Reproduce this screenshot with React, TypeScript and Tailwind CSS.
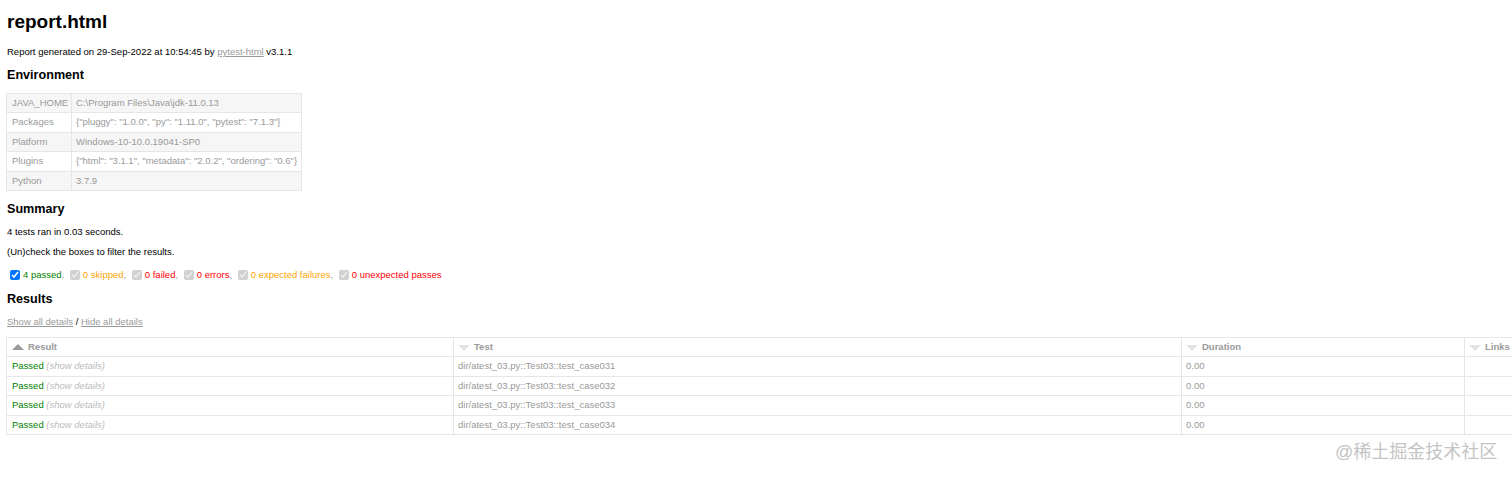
import React from "react";

const envRows: [string, string][] = [
  ["JAVA_HOME", "C:\\Program Files\\Java\\jdk-11.0.13"],
  ["Packages", '{"pluggy": "1.0.0", "py": "1.11.0", "pytest": "7.1.3"}'],
  ["Platform", "Windows-10-10.0.19041-SP0"],
  ["Plugins", '{"html": "3.1.1", "metadata": "2.0.2", "ordering": "0.6"}'],
  ["Python", "3.7.9"],
];

const tests = ["031", "032", "033", "034"];

function SortUp() {
  return (
    <span className="inline-block w-0 h-0 border-l-[6px] border-r-[6px] border-b-[6px] border-l-transparent border-r-transparent border-b-[#999] mr-[4px] align-middle relative top-[-1px]" />
  );
}
function SortDown() {
  return (
    <span className="inline-block w-0 h-0 border-l-[6px] border-r-[6px] border-t-[6px] border-l-transparent border-r-transparent border-t-[#e2e2e2] mr-[4px] align-middle relative top-[0px]" />
  );
}

function Filter({ label, color, active }: { label: string; color: string; active?: boolean }) {
  return (
    <span className="inline-flex items-center">
      <input
        type="checkbox"
        defaultChecked
        disabled={!active}
        className="w-[10px] h-[10px] ml-[3px] mr-[3px] m-0"
      />
      <span className={color}>{label}</span>
    </span>
  );
}

export default function App() {
  return (
    <div className="relative min-h-[479px] bg-white font-['Liberation_Sans',Arial,sans-serif] text-[9.5px] text-black px-[7px] overflow-hidden">
      <h1 className="pt-[12px] text-[19px] leading-[20px] font-bold">report.html</h1>
      <p className="mt-[14px] leading-[12px]">
        Report generated on 29-Sep-2022 at 10:54:45 by{" "}
        <a className="text-[#999] underline">pytest-html</a> v3.1.1
      </p>
      <h2 className="mt-[9px] text-[12.6px] leading-[16px] font-bold">Environment</h2>
      <table className="mt-[10px] ml-[-1px] border-collapse w-[296px] text-[#999] table-fixed">
        <tbody>
          {envRows.map(([k, v], i) => (
            <tr key={k} className={`h-[19.4px] ${i % 2 === 0 ? "bg-[#f6f6f6]" : "bg-white"}`}>
              <td className="w-[65px] border border-[#e6e6e6] px-[5px] py-0 whitespace-nowrap">{k}</td>
              <td className="border border-[#e6e6e6] px-[4px] py-0 whitespace-nowrap">{v}</td>
            </tr>
          ))}
        </tbody>
      </table>
      <h2 className="mt-[10px] text-[12.6px] leading-[16px] font-bold">Summary</h2>
      <p className="mt-[9px] leading-[12px]">4 tests ran in 0.03 seconds.</p>
      <p className="mt-[8px] leading-[12px]">(Un)check the boxes to filter the results.</p>
      <div className="mt-[10px] h-[14px] flex items-center whitespace-pre">
        <Filter label="4 passed" color="text-[#008000]" active />
        <span className="text-[#999]">, </span>
        <Filter label="0 skipped" color="text-[#ffa500]" />
        <span className="text-[#999]">, </span>
        <Filter label="0 failed" color="text-[#ff0000]" />
        <span className="text-[#999]">, </span>
        <Filter label="0 errors" color="text-[#ff0000]" />
        <span className="text-[#999]">, </span>
        <Filter label="0 expected failures" color="text-[#ffa500]" />
        <span className="text-[#999]">, </span>
        <Filter label="0 unexpected passes" color="text-[#ff0000]" />
      </div>
      <h2 className="mt-[9px] text-[12.6px] leading-[16px] font-bold">Results</h2>
      <p className="mt-[9px] leading-[12px]">
        <a className="text-[#999] underline">Show all details</a>
        {"\u00a0/\u00a0"}
        <a className="text-[#999] underline">Hide all details</a>
      </p>
      <div className="mt-[9px] ml-[-1px] w-[1520px]">
        <table className="border-collapse table-fixed w-[1528px] text-[#999]">
          <colgroup>
            <col className="w-[447px]" />
            <col className="w-[728px]" />
            <col className="w-[283px]" />
            <col className="w-[70px]" />
          </colgroup>
          <thead>
            <tr className="h-[19.4px]">
              <th className="border border-[#e6e6e6] px-[5px] py-0 text-left font-bold">
                <SortUp />Result
              </th>
              <th className="border border-[#e6e6e6] px-[4px] py-0 text-left font-bold">
                <SortDown />Test
              </th>
              <th className="border border-[#e6e6e6] px-[4px] py-0 text-left font-bold">
                <SortDown />Duration
              </th>
              <th className="border border-[#e6e6e6] px-[4px] py-0 text-left font-bold">
                <SortDown />Links
              </th>
            </tr>
          </thead>
          <tbody>
            {tests.map((t) => (
              <tr key={t} className="h-[19.4px]">
                <td className="border border-[#e6e6e6] px-[5px] py-0">
                  <span className="text-[#008000]">Passed</span>{" "}
                  <span className="italic text-[#bbb]">(show details)</span>
                </td>
                <td className="border border-[#e6e6e6] px-[4px] py-0">
                  dir/atest_03.py::Test03::test_case{t}
                </td>
                <td className="border border-[#e6e6e6] px-[4px] py-0">0.00</td>
                <td className="border border-[#e6e6e6] px-[4px] py-0"></td>
              </tr>
            ))}
          </tbody>
        </table>
      </div>
      <div className="absolute left-[1335px] top-[440px] text-[18px] leading-[24px] text-[#c4c4c4] font-['Liberation_Sans','Noto_Sans_CJK_SC',sans-serif] whitespace-nowrap">
        @稀土掘金技术社区
      </div>
    </div>
  );
}
